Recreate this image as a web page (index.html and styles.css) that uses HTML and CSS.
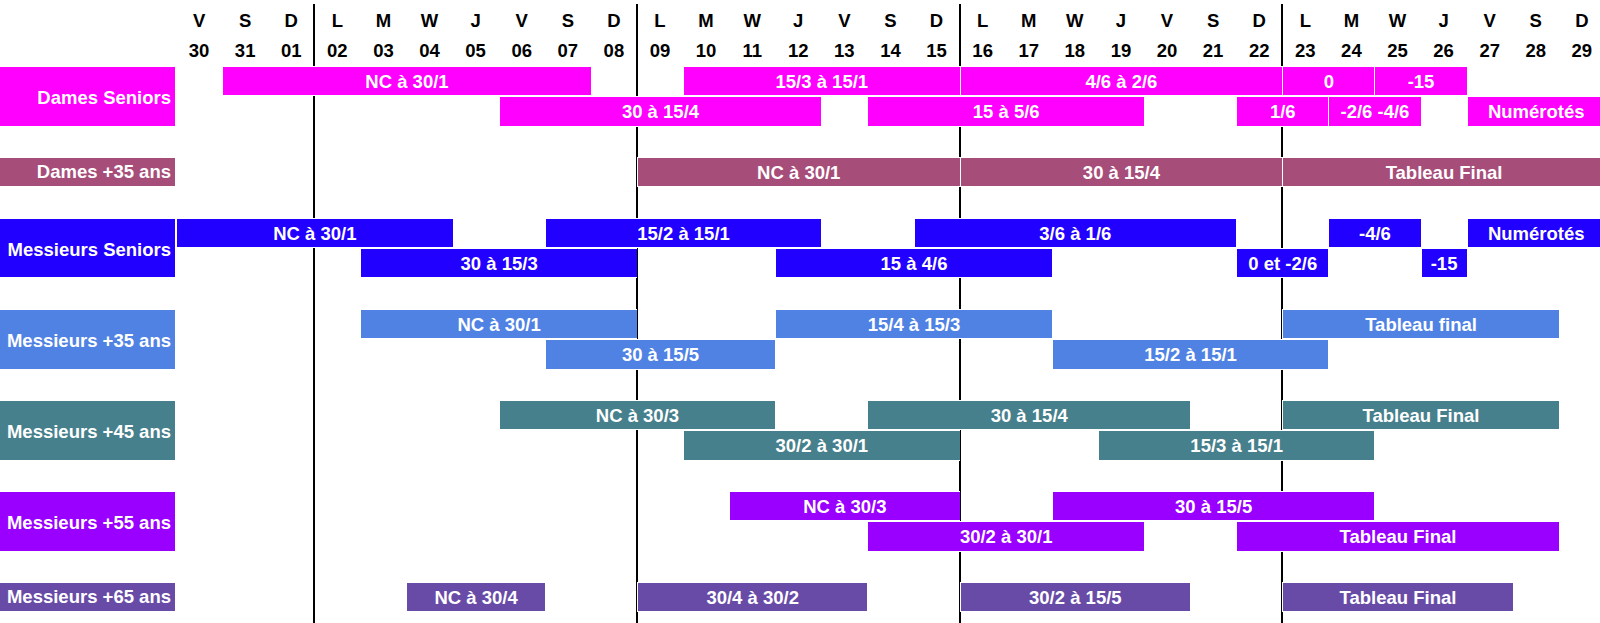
FILE: index.html
```html
<!DOCTYPE html>
<html lang="fr">
<head>
<meta charset="utf-8">
<title>Planning</title>
<link rel="stylesheet" href="styles.css">
</head>
<body>
<div class="chart">
  <div class="head">
    <div class="corner"></div>
    <div class="dl">V</div><div class="dn">30</div>
    <div class="dl">S</div><div class="dn">31</div>
    <div class="dl">D</div><div class="dn">01</div>
    <div class="dl">L</div><div class="dn">02</div>
    <div class="dl">M</div><div class="dn">03</div>
    <div class="dl">W</div><div class="dn">04</div>
    <div class="dl">J</div><div class="dn">05</div>
    <div class="dl">V</div><div class="dn">06</div>
    <div class="dl">S</div><div class="dn">07</div>
    <div class="dl">D</div><div class="dn">08</div>
    <div class="dl">L</div><div class="dn">09</div>
    <div class="dl">M</div><div class="dn">10</div>
    <div class="dl">W</div><div class="dn">11</div>
    <div class="dl">J</div><div class="dn">12</div>
    <div class="dl">V</div><div class="dn">13</div>
    <div class="dl">S</div><div class="dn">14</div>
    <div class="dl">D</div><div class="dn">15</div>
    <div class="dl">L</div><div class="dn">16</div>
    <div class="dl">M</div><div class="dn">17</div>
    <div class="dl">W</div><div class="dn">18</div>
    <div class="dl">J</div><div class="dn">19</div>
    <div class="dl">V</div><div class="dn">20</div>
    <div class="dl">S</div><div class="dn">21</div>
    <div class="dl">D</div><div class="dn">22</div>
    <div class="dl">L</div><div class="dn">23</div>
    <div class="dl">M</div><div class="dn">24</div>
    <div class="dl">W</div><div class="dn">25</div>
    <div class="dl">J</div><div class="dn">26</div>
    <div class="dl">V</div><div class="dn">27</div>
    <div class="dl">S</div><div class="dn">28</div>
    <div class="dl">D</div><div class="dn">29</div>
  </div>

  <div class="groups">
    <div class="group double ds">
      <div class="label">Dames Seniors</div>
      <div class="bar l1" style="grid-column: 3 / span 8">NC à 30/1</div>
      <div class="bar l1" style="grid-column: 13 / span 6">15/3 à 15/1</div>
      <div class="bar l1" style="grid-column: 19 / span 7">4/6 à 2/6</div>
      <div class="bar l1" style="grid-column: 26 / span 2">0</div>
      <div class="bar l1" style="grid-column: 28 / span 2">-15</div>
      <div class="bar l2" style="grid-column: 9 / span 7">30 à 15/4</div>
      <div class="bar l2" style="grid-column: 17 / span 6">15 à 5/6</div>
      <div class="bar l2" style="grid-column: 25 / span 2">1/6</div>
      <div class="bar l2" style="grid-column: 27 / span 2">-2/6 -4/6</div>
      <div class="bar l2" style="grid-column: 30 / span 3">Numérotés</div>
    </div>

    <div class="group single d35">
      <div class="label">Dames +35 ans</div>
      <div class="bar l1" style="grid-column: 12 / span 7">NC à 30/1</div>
      <div class="bar l1" style="grid-column: 19 / span 7">30 à 15/4</div>
      <div class="bar l1" style="grid-column: 26 / span 7">Tableau Final</div>
    </div>

    <div class="group double ms">
      <div class="label">Messieurs Seniors</div>
      <div class="bar l1" style="grid-column: 2 / span 6">NC à 30/1</div>
      <div class="bar l1" style="grid-column: 10 / span 6">15/2 à 15/1</div>
      <div class="bar l1" style="grid-column: 18 / span 7">3/6 à 1/6</div>
      <div class="bar l1" style="grid-column: 27 / span 2">-4/6</div>
      <div class="bar l1" style="grid-column: 30 / span 3">Numérotés</div>
      <div class="bar l2" style="grid-column: 6 / span 6">30 à 15/3</div>
      <div class="bar l2" style="grid-column: 15 / span 6">15 à 4/6</div>
      <div class="bar l2" style="grid-column: 25 / span 2">0 et -2/6</div>
      <div class="bar l2" style="grid-column: 29 / span 1">-15</div>
    </div>

    <div class="group double m35">
      <div class="label">Messieurs +35 ans</div>
      <div class="bar l1" style="grid-column: 6 / span 6">NC à 30/1</div>
      <div class="bar l1" style="grid-column: 15 / span 6">15/4 à 15/3</div>
      <div class="bar l1" style="grid-column: 26 / span 6">Tableau final</div>
      <div class="bar l2" style="grid-column: 10 / span 5">30 à 15/5</div>
      <div class="bar l2" style="grid-column: 21 / span 6">15/2 à 15/1</div>
    </div>

    <div class="group double m45">
      <div class="label">Messieurs +45 ans</div>
      <div class="bar l1" style="grid-column: 9 / span 6">NC à 30/3</div>
      <div class="bar l1" style="grid-column: 17 / span 7">30 à 15/4</div>
      <div class="bar l1" style="grid-column: 26 / span 6">Tableau Final</div>
      <div class="bar l2" style="grid-column: 13 / span 6">30/2 à 30/1</div>
      <div class="bar l2" style="grid-column: 22 / span 6">15/3 à 15/1</div>
    </div>

    <div class="group double m55">
      <div class="label">Messieurs +55 ans</div>
      <div class="bar l1" style="grid-column: 14 / span 5">NC à 30/3</div>
      <div class="bar l1" style="grid-column: 21 / span 7">30 à 15/5</div>
      <div class="bar l2" style="grid-column: 17 / span 6">30/2 à 30/1</div>
      <div class="bar l2" style="grid-column: 25 / span 7">Tableau Final</div>
    </div>

    <div class="group single m65">
      <div class="label">Messieurs +65 ans</div>
      <div class="bar l1" style="grid-column: 7 / span 3">NC à 30/4</div>
      <div class="bar l1" style="grid-column: 12 / span 5">30/4 à 30/2</div>
      <div class="bar l1" style="grid-column: 19 / span 5">30/2 à 15/5</div>
      <div class="bar l1" style="grid-column: 26 / span 5">Tableau Final</div>
    </div>
  </div>
</div>
</body>
</html>
```

FILE: styles.css
```css
html, body {
  margin: 0;
  padding: 0;
  overflow: hidden;
  background: #fff;
}

body {
  font-family: "Liberation Sans", Arial, sans-serif;
  font-weight: bold;
  font-size: 18.5px;
  color: #000;
}

.chart {
  --cols: 176px repeat(31, 46.1px);
  --row: 30.37px;
  margin-top: 4px;
  width: 1606px;
  height: 619px;
  display: flex;
  flex-direction: column;
  background-image:
    linear-gradient(#000, #000),
    linear-gradient(#000, #000),
    linear-gradient(#000, #000),
    linear-gradient(#000, #000);
  background-size: 2px 100%;
  background-repeat: no-repeat;
  background-position: 313px 0, 636px 0, 959px 0, 1281px 0;
}

.head {
  display: grid;
  grid-template-columns: var(--cols);
  grid-template-rows: 31.6px var(--row);
  grid-auto-flow: column;
}

.corner {
  grid-row: span 2;
}

.dl,
.dn {
  display: flex;
  align-items: center;
  justify-content: center;
  line-height: 1;
}

.dl {
  padding-top: 2px;
}

.groups {
  display: flex;
  flex-direction: column;
  gap: var(--row);
}

.group {
  display: grid;
  grid-template-columns: var(--cols);
}

.group.double {
  grid-template-rows: repeat(2, var(--row));
}

.group.single {
  grid-template-rows: var(--row);
}

.ds  { --c: #ff00ff; }
.d35 { --c: #a64d79; }
.ms  { --c: #2200ff; }
.m35 { --c: #5082e4; }
.m45 { --c: #46808c; }
.m55 { --c: #9900ff; }
.m65 { --c: #684ba7; }

.label {
  grid-column: 1;
  grid-row: 1 / -1;
  display: flex;
  align-items: center;
  justify-content: flex-end;
  padding-right: 4px;
  padding-top: 1px;
  color: #fff;
  background-color: var(--c);
  background-clip: padding-box;
  border-top: 1px solid #fff;
  border-bottom: 1px solid #fff;
  border-right: 1px solid #fff;
  white-space: nowrap;
  line-height: 1;
}

.double .label {
  padding-top: 4px;
}

.bar {
  display: flex;
  align-items: center;
  justify-content: center;
  padding-top: 2px;
  color: #fff;
  background-color: var(--c);
  background-clip: padding-box;
  border-top: 1px solid #fff;
  border-bottom: 1px solid #fff;
  border-left: 1px solid #fff;
  white-space: nowrap;
  line-height: 1;
}

.l1 { grid-row: 1; }
.l2 { grid-row: 2; }
```
